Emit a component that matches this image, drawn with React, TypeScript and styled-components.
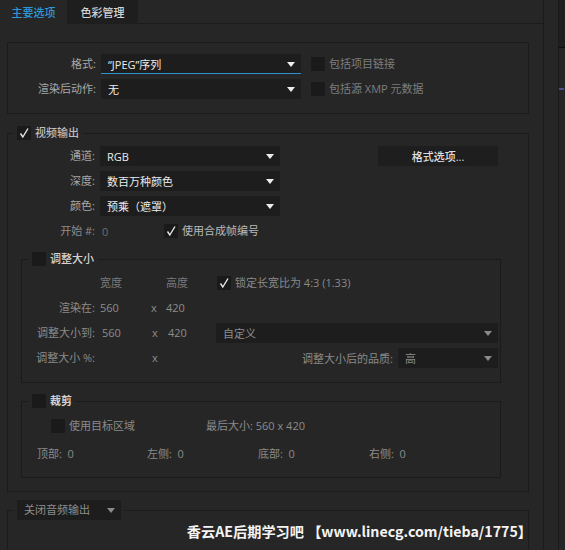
import styled, { createGlobalStyle } from 'styled-components';

const GlobalStyle = createGlobalStyle`
	html, body {
		margin: 0;
		padding: 0;
		background: #262626;
	}
	body {
		font-family: "Open Sans", "Noto Sans CJK SC", sans-serif;
		font-size: 11px;
		color: #a6a6a6;
	}
	* {
		box-sizing: border-box;
	}
`;

const Page = styled.div`
	display: flex;
	height: 550px;
	overflow: hidden;
	background: #262626;
`;

const Main = styled.div`
	width: 544px;
	flex-shrink: 0;
	border-right: 1px solid #1b1b1b;
	display: flex;
	flex-direction: column;
	overflow: hidden;
`;

const Side = styled.div`
	flex: 1;
	display: flex;
	justify-content: flex-end;
`;

const SideStrip = styled.div`
	width: 7px;
	border-left: 1px solid #1a1a1a;
	display: flex;
	flex-direction: column;
`;

const SideTop = styled.div`
	height: 48px;
	background: #1f1f1f;
	border-bottom: 1px solid #0c0c0c;
`;

const SideMark = styled.div`
	margin-top: 40px;
	height: 2px;
	width: 5px;
	background: #4d4f8c;
`;

const TabBar = styled.div`
	display: flex;
	height: 24px;
	flex-shrink: 0;
`;

const Tab = styled.div<{ $active?: boolean; $width: number }>`
	width: ${(p) => p.$width}px;
	display: flex;
	align-items: center;
	justify-content: center;
	font-weight: 500;
	color: ${(p) => (p.$active ? '#2e97d6' : '#d4d4d4')};
	background: ${(p) => (p.$active ? '#262626' : '#1e1e1e')};
	border-bottom: 1px solid ${(p) => (p.$active ? '#262626' : '#1e1e1e')};
`;

const TabFill = styled.div`
	flex: 1;
	border-bottom: 1px solid #1b1b1b;
`;

const Content = styled.div`
	padding: 18px 14px 0 7px;
	flex: 1;
	min-height: 0;
`;

const FormatBox = styled.div`
	border: 1px solid #1b1b1b;
	padding: 11px 0 14px;
	display: grid;
	grid-template-columns: 93px 200px 1fr;
	grid-auto-rows: 20px;
	row-gap: 5px;
`;

const Label = styled.div<{ $dim?: boolean }>`
	text-align: right;
	padding-right: 5px;
	line-height: 20px;
	white-space: nowrap;
	color: ${(p) => (p.$dim ? '#8a8a8a' : '#a8a8a8')};
`;

const Value = styled.div<{ $shift?: number }>`
	line-height: 20px;
	color: #8c8c8c;
	padding-left: ${(p) => p.$shift ?? 0}px;
	white-space: nowrap;
`;

const SelectBox = styled.div<{ $focused?: boolean; $dim?: boolean; $width?: number }>`
	height: 20px;
	width: ${(p) => (p.$width ? `${p.$width}px` : 'auto')};
	background: #1d1d1d;
	display: flex;
	align-items: center;
	justify-content: space-between;
	padding: 0 6px 0 7px;
	color: ${(p) => (p.$dim ? '#8c8c8c' : '#ececec')};
	box-shadow: ${(p) => (p.$focused ? 'inset 0 -1px 0 #2f90cc' : 'none')};
	white-space: nowrap;
`;

const Arrow = styled.span<{ $dim?: boolean }>`
	width: 0;
	height: 0;
	border-left: 4px solid transparent;
	border-right: 4px solid transparent;
	border-top: 5px solid ${(p) => (p.$dim ? '#8a8a8a' : '#ededed')};
	flex-shrink: 0;
`;

const CheckItem = styled.div<{ $pad?: number }>`
	display: flex;
	align-items: center;
	gap: 4px;
	padding-left: ${(p) => p.$pad ?? 0}px;
	line-height: 20px;
	white-space: nowrap;
`;

const Box = styled.span`
	width: 14px;
	height: 14px;
	background: #1a1a1a;
	display: inline-flex;
	align-items: center;
	justify-content: center;
	flex-shrink: 0;
`;

const CheckText = styled.span<{ $tone: string }>`
	color: ${(p) => p.$tone};
`;

const Group = styled.fieldset<{ $mt: number; $mx?: number; $pad: string }>`
	margin: ${(p) => p.$mt}px ${(p) => p.$mx ?? 0}px 0;
	border: 1px solid #1b1b1b;
	padding: ${(p) => p.$pad};
	min-width: 0;
`;

const OpenGroup = styled(Group)`
	border-bottom: none;
	min-height: 80px;
`;

const Legend = styled.legend<{ $ml: number }>`
	margin-left: ${(p) => p.$ml}px;
	padding: 0 4px;
	height: 16px;
	display: flex;
	align-items: center;
	gap: 4px;
	line-height: 16px;
`;

const LegendText = styled.span<{ $bold?: boolean; $tone?: string }>`
	color: ${(p) => p.$tone ?? '#d2d2d2'};
	font-weight: ${(p) => (p.$bold ? 700 : 500)};
`;

const VideoGrid = styled.div`
	display: grid;
	grid-template-columns: 92px 180px 98px 120px;
	grid-auto-rows: 20px;
	row-gap: 5px;
`;

const FormatButton = styled.div`
	grid-column: 4;
	background: #1e1e1e;
	color: #dedede;
	font-weight: 500;
	display: flex;
	align-items: center;
	justify-content: center;
`;

const StartCell = styled.div`
	grid-column: 2 / 5;
	display: flex;
	align-items: center;
`;

const StartValue = styled.span`
	width: 64px;
	padding-left: 2px;
	color: #6c6c6c;
`;

const ResizeGrid = styled.div`
	display: grid;
	grid-template-columns: 78px 51px 15px 50px 282px;
	grid-auto-rows: 20px;
	row-gap: 5px;
`;

const Head = styled.div<{ $col: number }>`
	grid-column: ${(p) => p.$col};
	line-height: 20px;
	color: #7a7a7a;
`;

const QualityCell = styled.div`
	grid-column: 5;
	display: flex;
	justify-content: flex-end;
	align-items: center;
	gap: 5px;
	color: #8a8a8a;
	white-space: nowrap;
`;

const CropTop = styled.div`
	display: grid;
	grid-template-columns: 184px 1fr;
	height: 20px;
	align-items: center;
`;

const CropSides = styled.div`
	margin-top: 7px;
	padding-left: 15px;
	display: grid;
	grid-template-columns: 110px 111px 111px 1fr;
	height: 20px;
	align-items: center;
	color: #8a8a8a;
`;

const Watermark = styled.div`
	text-align: right;
	padding-top: 3px;
	margin-right: -4px;
	color: #f4f4f4;
	font-family: "Noto Sans CJK SC", sans-serif;
	font-size: 14.2px;
	font-weight: 700;
	line-height: 20px;
	white-space: nowrap;
`;

function Check({ on }: { on?: boolean }) {
	return (
		<Box>
			{on && (
				<svg width="12" height="12" viewBox="0 0 12 12">
					<polyline
						points="2.5,6.5 4.8,10 10,1.5"
						fill="none"
						stroke="#e6e6e6"
						strokeWidth="1.4"
					/>
				</svg>
			)}
		</Box>
	);
}

function Select({
	value,
	focused,
	dim,
	width,
}: {
	value: string;
	focused?: boolean;
	dim?: boolean;
	width?: number;
}) {
	return (
		<SelectBox $focused={focused} $dim={dim} $width={width}>
			<span>{value}</span>
			<Arrow $dim={dim} />
		</SelectBox>
	);
}

function App() {
	return (
		<Page>
			<GlobalStyle />
			<Main>
				<TabBar>
					<Tab $active $width={67}>
						主要选项
					</Tab>
					<Tab $width={71}>色彩管理</Tab>
					<TabFill />
				</TabBar>
				<Content>
					<FormatBox>
						<Label>格式:</Label>
						<Select value="“JPEG”序列" focused />
						<CheckItem $pad={10}>
							<Check />
							<CheckText $tone="#7e7e7e">包括项目链接</CheckText>
						</CheckItem>
						<Label>渲染后动作:</Label>
						<Select value="无" />
						<CheckItem $pad={10}>
							<Check />
							<CheckText $tone="#7e7e7e">包括源 XMP 元数据</CheckText>
						</CheckItem>
					</FormatBox>

					<Group $mt={11} $pad="5px 14px 13px 0">
						<Legend $ml={5}>
							<Check on />
							<LegendText $tone="#bdbdbd">视频输出</LegendText>
						</Legend>
						<VideoGrid>
							<Label>通道:</Label>
							<Select value="RGB" />
							<FormatButton>格式选项...</FormatButton>
							<Label>深度:</Label>
							<Select value="数百万种颜色" />
							<span />
							<span />
							<Label>颜色:</Label>
							<Select value="预乘（遮罩）" />
							<span />
							<span />
							<Label $dim>开始 #:</Label>
							<StartCell>
								<StartValue>0</StartValue>
								<CheckItem>
									<Check on />
									<CheckText $tone="#b9b9b9">使用合成帧编号</CheckText>
								</CheckItem>
							</StartCell>
						</VideoGrid>

						<Group $mt={10} $mx={13} $pad="6px 0 14px 0">
							<Legend $ml={6}>
								<Check />
								<LegendText>调整大小</LegendText>
							</Legend>
							<ResizeGrid>
								<span />
								<Head $col={2}>宽度</Head>
								<Head $col={4}>高度</Head>
								<CheckItem $pad={1}>
									<Check on />
									<CheckText $tone="#8a8a8a">锁定长宽比为 4:3 (1.33)</CheckText>
								</CheckItem>

								<Label $dim>渲染在:</Label>
								<Value>560</Value>
								<Value>x</Value>
								<Value>420</Value>
								<span />

								<Label $dim>调整大小到:</Label>
								<Value $shift={2}>560</Value>
								<Value $shift={1}>x</Value>
								<Value $shift={2}>420</Value>
								<Select value="自定义" dim />

								<Label $dim>调整大小 %:</Label>
								<span />
								<Value $shift={1}>x</Value>
								<span />
								<QualityCell>
									调整大小后的品质:
									<Select value="高" dim width={100} />
								</QualityCell>
							</ResizeGrid>
						</Group>

						<Group $mt={10} $mx={13} $pad="7px 0 14px 0">
							<Legend $ml={6}>
								<Check />
								<LegendText $bold>裁剪</LegendText>
							</Legend>
							<CropTop>
								<CheckItem $pad={29}>
									<Check />
									<CheckText $tone="#8a8a8a">使用目标区域</CheckText>
								</CheckItem>
								<Value>最后大小: 560 x 420</Value>
							</CropTop>
							<CropSides>
								<span>顶部:&nbsp; 0</span>
								<span>左侧:&nbsp; 0</span>
								<span>底部:&nbsp; 0</span>
								<span>右侧:&nbsp; 0</span>
							</CropSides>
						</Group>
					</Group>

					<OpenGroup $mt={10} $pad="0">
						<Legend $ml={5}>
							<Select value="关闭音频输出" dim width={104} />
						</Legend>
						<Watermark>香云AE后期学习吧 【www.linecg.com/tieba/1775】</Watermark>
					</OpenGroup>
				</Content>
			</Main>
			<Side>
				<SideStrip>
					<SideTop />
					<SideMark />
				</SideStrip>
			</Side>
		</Page>
	);
}

export default App;
